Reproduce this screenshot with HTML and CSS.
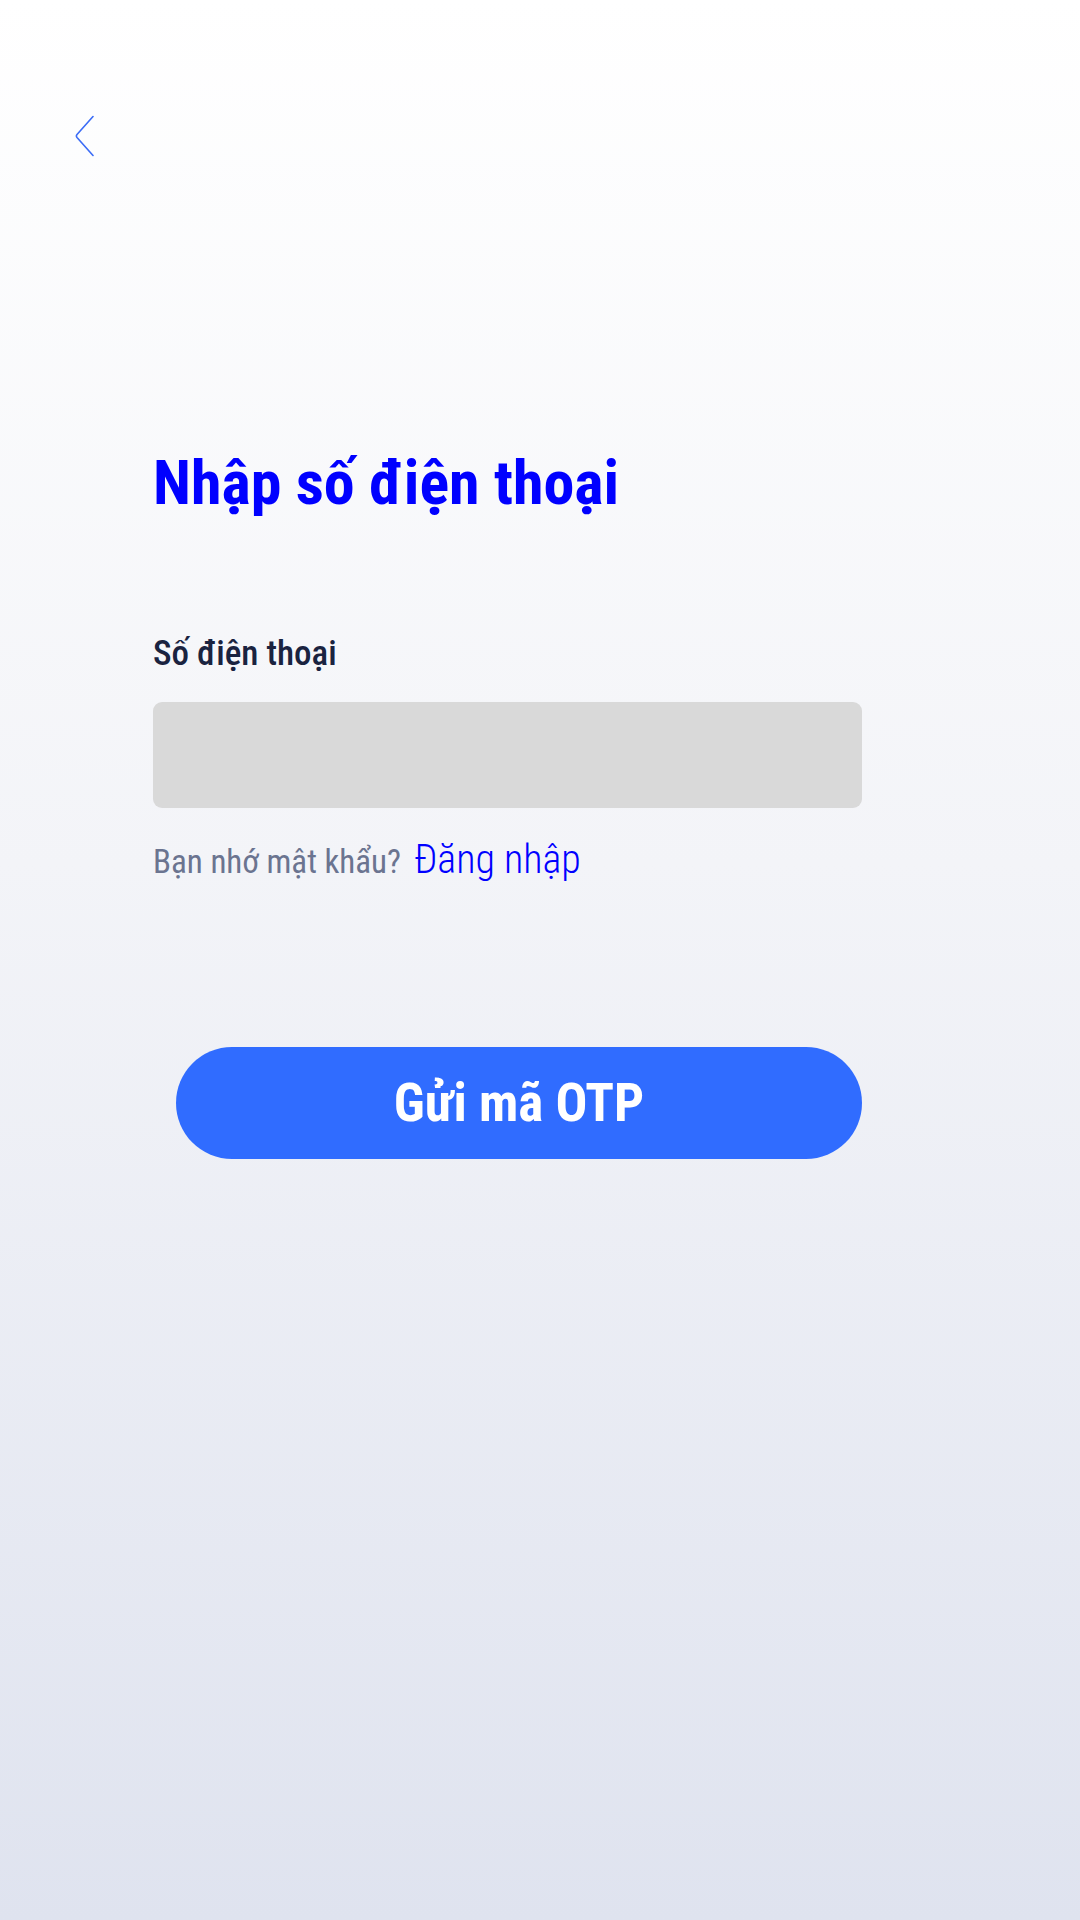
FILE: index.html
```html
<!DOCTYPE html>
<html lang="vi">
<head>
<meta charset="utf-8">
<link rel="stylesheet" href="styles.css">
</head>
<body>
<div class="screen">
  <div class="topbar">
    <svg class="back" width="20" height="42" viewBox="0 0 20 42" fill="none">
      <path d="M18 1.5 L2 19.5 Q0.8 21 2 22.5 L18 40.5" stroke="#3b6cf6" stroke-width="1.6" stroke-linecap="round" stroke-linejoin="round"/>
    </svg>
  </div>
  <main class="content">
    <h1 class="title">Nhập số điện thoại</h1>
    <label class="label">Số điện thoại</label>
    <div class="input"></div>
    <p class="hint"><span class="muted">Bạn nhớ mật khẩu?</span><a class="link">Đăng nhập</a></p>
    <div class="btn-row"><button class="btn">Gửi mã OTP</button></div>
  </main>
</div>
</body>
</html>
```
FILE: styles.css
```css
html, body { margin: 0; padding: 0; }
body {
  width: 1080px;
  height: 1920px;
  background: linear-gradient(180deg, #ffffff 0%, #f3f4f8 45%, #dfe3ef 100%);
  font-family: "Roboto Condensed", "Roboto", "Liberation Sans Narrow", sans-serif;
  font-stretch: condensed;
  overflow: hidden;
}
.screen { display: flex; flex-direction: column; }
.topbar { padding: 115px 0 0 75px; height: 50px; }
.back { display: block; }
.content { padding: 0 218px 0 153px; display: flex; flex-direction: column; margin-top: 287px; }
.title { margin: 0; font-size: 62px; font-weight: 700; color: #0000ff; line-height: 1; }
.label { margin-top: 122px; font-size: 35px; font-weight: 500; color: #1a2340; line-height: 1; }
.input { margin-top: 31px; height: 106px; background: #d9d9d9; border-radius: 9px; }
.hint { margin: 32px 0 0; display: flex; align-items: baseline; gap: 13px; line-height: 1; }
.muted { font-size: 33px; font-weight: 400; color: #6b7490; }
.link { font-size: 40px; font-weight: 300; color: #0000ff; }
.btn-row { margin-top: 167px; padding-left: 23px; display: flex; }
.btn {
  flex: 1;
  height: 112px;
  border: none;
  border-radius: 56px;
  background: #306cff;
  color: #ffffff;
  font-family: inherit;
  font-stretch: condensed;
  font-size: 53px;
  font-weight: 700;
}
```
